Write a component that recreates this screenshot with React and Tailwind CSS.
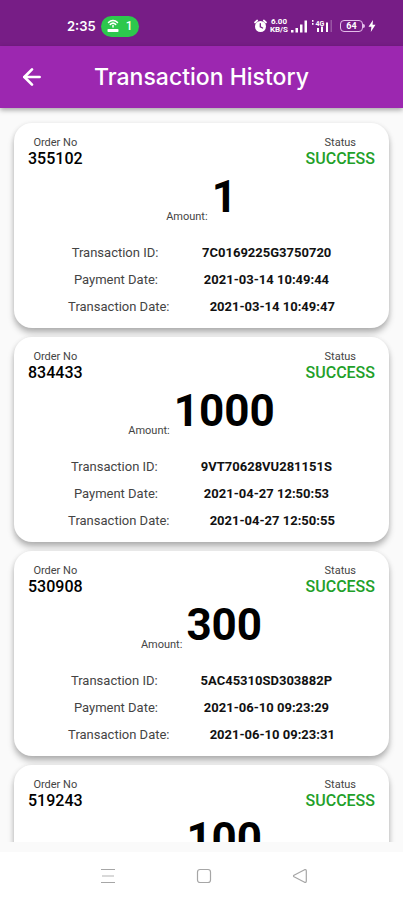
import { ArrowLeft } from 'lucide-react';

const transactions = [
  { orderNo: '355102', amount: '1', id: '7C0169225G3750720', paid: '2021-03-14 10:49:44', created: '2021-03-14 10:49:47' },
  { orderNo: '834433', amount: '1000', id: '9VT70628VU281151S', paid: '2021-04-27 12:50:53', created: '2021-04-27 12:50:55' },
  { orderNo: '530908', amount: '300', id: '5AC45310SD303882P', paid: '2021-06-10 09:23:29', created: '2021-06-10 09:23:31' },
  { orderNo: '519243', amount: '100' },
];

export default function App() {
  return (
    <div className="flex h-screen flex-col overflow-hidden bg-[#fafafa] font-['Roboto',sans-serif] text-black">
      <StatusBar />

      {/* App bar */}
      <header className="z-10 flex h-[62px] shrink-0 items-center bg-[#9c27b0] px-2 text-white shadow-[0_2px_5px_rgba(0,0,0,0.35)]">
        <button type="button" aria-label="Back" className="flex size-12 items-center justify-center">
          <ArrowLeft className="size-[26px]" strokeWidth={2.5} />
        </button>
        <h1 className="flex-1 text-center font-['Inter',sans-serif] text-[23px] leading-7 font-medium whitespace-nowrap">
          Transaction History
        </h1>
        <div className="w-12" />
      </header>

      {/* Transaction list */}
      <main className="mb-[10px] min-h-0 flex-1 overflow-y-auto px-[14px] pt-[15px] [scrollbar-width:none]">
        <ul className="flex flex-col gap-[9px]">
          {transactions.map((item) => (
            <TransactionCard key={item.orderNo} item={item} />
          ))}
        </ul>
      </main>

      <NavigationBar />
    </div>
  );
}

function TransactionCard({ item }) {
  return (
    <li className="rounded-[18px] bg-white px-[14px] py-[13px] shadow-[0_5px_6px_rgba(0,0,0,0.25),0_1px_5px_rgba(0,0,0,0.1)]">
      <div className="flex justify-between text-center">
        <div>
          <p className="text-[11px] leading-[13px] text-[#444]">Order No</p>
          <p className="text-base leading-[19px] font-medium">{item.orderNo}</p>
        </div>
        <div>
          <p className="text-[11px] leading-[13px] text-[#444]">Status</p>
          <p className="text-base leading-[19px] font-medium text-[#1fa02a]">SUCCESS</p>
        </div>
      </div>

      <div className="mt-[3px] flex items-end justify-center gap-1">
        <span className="text-[11px] leading-[13px] text-[#444]">Amount:</span>
        <span className="text-[44px] leading-[52px] font-bold">{item.amount}</span>
      </div>

      {item.id && (
        <dl className="mt-[22px] flex flex-col gap-[11px]">
          <DetailRow label="Transaction ID:" value={item.id} />
          <DetailRow label="Payment Date:" value={item.paid} />
          <DetailRow label="Transaction Date:" value={item.created} />
        </dl>
      )}
    </li>
  );
}

function DetailRow({ label, value }) {
  return (
    <div className="flex justify-evenly text-[13px] leading-4 whitespace-nowrap">
      <dt className="text-[#444]">{label}</dt>
      <dd className="font-bold text-[#111]">{value}</dd>
    </div>
  );
}

function StatusBar() {
  return (
    <div className="flex h-[46px] shrink-0 items-center justify-between bg-[#771d86] pt-[6px] pr-[27px] pl-[67px] text-white">
      <div className="flex items-center gap-[5px]">
        <span className="font-['Inter',sans-serif] text-[13px] leading-5 font-semibold">2:35</span>
        <span className="flex h-[21px] w-[38px] items-center justify-center gap-[7px] rounded-full bg-[#2dc84d]">
          <HotspotIcon />
          <span className="text-xs leading-4 font-medium">1</span>
        </span>
      </div>

      <div className="flex items-center gap-[3px]">
        <AlarmIcon />
        <span className="flex flex-col items-center text-[8px] leading-2 font-bold">
          <span>6.00</span>
          <span>KB/S</span>
        </span>
        <SignalIcon />
        <MobileDataIcon />
        <span className="ml-1 flex items-center">
          <span className="flex h-3 w-[23px] items-center justify-center rounded-[4px] border border-[#e3bdea] text-[9px] leading-[10px] font-bold">
            64
          </span>
          <span className="h-1 w-[2px] rounded-r-sm bg-[#e3bdea]" />
        </span>
        <BoltIcon />
      </div>
    </div>
  );
}

function HotspotIcon() {
  return (
    <svg width="12" height="14" viewBox="0 0 12 14" fill="none" stroke="white" strokeWidth="1.5" strokeLinecap="round">
      <path d="M1.5 3.4C4 0.8 8 0.8 10.5 3.4" />
      <path d="M3.3 5.4C4.8 4 7.2 4 8.7 5.4" />
      <path d="M6 6.5v1.5" />
      <rect x="0.5" y="10" width="11" height="3" rx="0.8" fill="white" stroke="none" />
    </svg>
  );
}

function AlarmIcon() {
  return (
    <svg width="13" height="14" viewBox="0 0 13 14">
      <circle cx="6.5" cy="7.5" r="5.5" fill="white" />
      <path d="M1 3.5L3.2 1.5M12 3.5L9.8 1.5" stroke="white" strokeWidth="1.7" strokeLinecap="round" />
      <path d="M6.3 4.6V7.8L8.6 9" fill="none" stroke="#771d86" strokeWidth="1.3" strokeLinecap="round" />
    </svg>
  );
}

function SignalIcon() {
  return (
    <svg width="17" height="13" viewBox="0 0 17 13" fill="white">
      <rect x="0" y="10" width="2.5" height="2.5" />
      <rect x="4.5" y="8" width="2.5" height="4.5" />
      <rect x="9" y="4.5" width="2.5" height="8" />
      <rect x="13.5" y="0.5" width="2.5" height="12" />
    </svg>
  );
}

function MobileDataIcon() {
  return (
    <svg width="22" height="14" viewBox="0 0 22 14" fill="white">
      <rect x="1" y="1" width="1.5" height="1.8" />
      <rect x="1" y="4" width="1.5" height="1.8" />
      <text x="4.5" y="6.5" fontSize="7" fontWeight="700" fontFamily="Roboto, sans-serif">4G</text>
      <rect x="6" y="9" width="2" height="4" />
      <rect x="10" y="7.5" width="2" height="5.5" />
      <rect x="15" y="3.5" width="2" height="9.5" />
      <rect x="19.5" y="1" width="1.5" height="12" opacity="0.25" />
    </svg>
  );
}

function BoltIcon() {
  return (
    <svg width="8" height="12" viewBox="0 0 8 12" fill="white">
      <path d="M5 0L0.5 6.8H3.4L2.8 12L7.5 4.8H4.6Z" />
    </svg>
  );
}

function NavigationBar() {
  return (
    <nav className="flex h-12 shrink-0 items-center justify-center gap-[72px] bg-white pl-[5px] text-[#a6a6a6]">
      <button type="button" aria-label="Recent apps" className="flex size-6 items-center justify-center">
        <svg width="16" height="16" viewBox="0 0 16 16" stroke="currentColor" strokeWidth="1.2">
          <path d="M1 1.5H15M1 14.5H15" />
          <path d="M2 8H14" opacity="0.7" />
        </svg>
      </button>
      <button type="button" aria-label="Home" className="flex size-6 items-center justify-center">
        <svg width="16" height="16" viewBox="0 0 16 16" fill="none" stroke="currentColor" strokeWidth="1.2">
          <rect x="1.5" y="1.5" width="13" height="13" rx="2.5" />
        </svg>
      </button>
      <button type="button" aria-label="Back to previous screen" className="flex size-6 items-center justify-center">
        <svg width="16" height="16" viewBox="0 0 16 16" fill="none" stroke="currentColor" strokeWidth="1.2" strokeLinejoin="round">
          <path d="M2 7.2L12.6 1.7Q14.3 1.2 14.3 3V13Q14.3 14.8 12.6 14.3L2 8.8Q1 8 2 7.2Z" />
        </svg>
      </button>
    </nav>
  );
}
